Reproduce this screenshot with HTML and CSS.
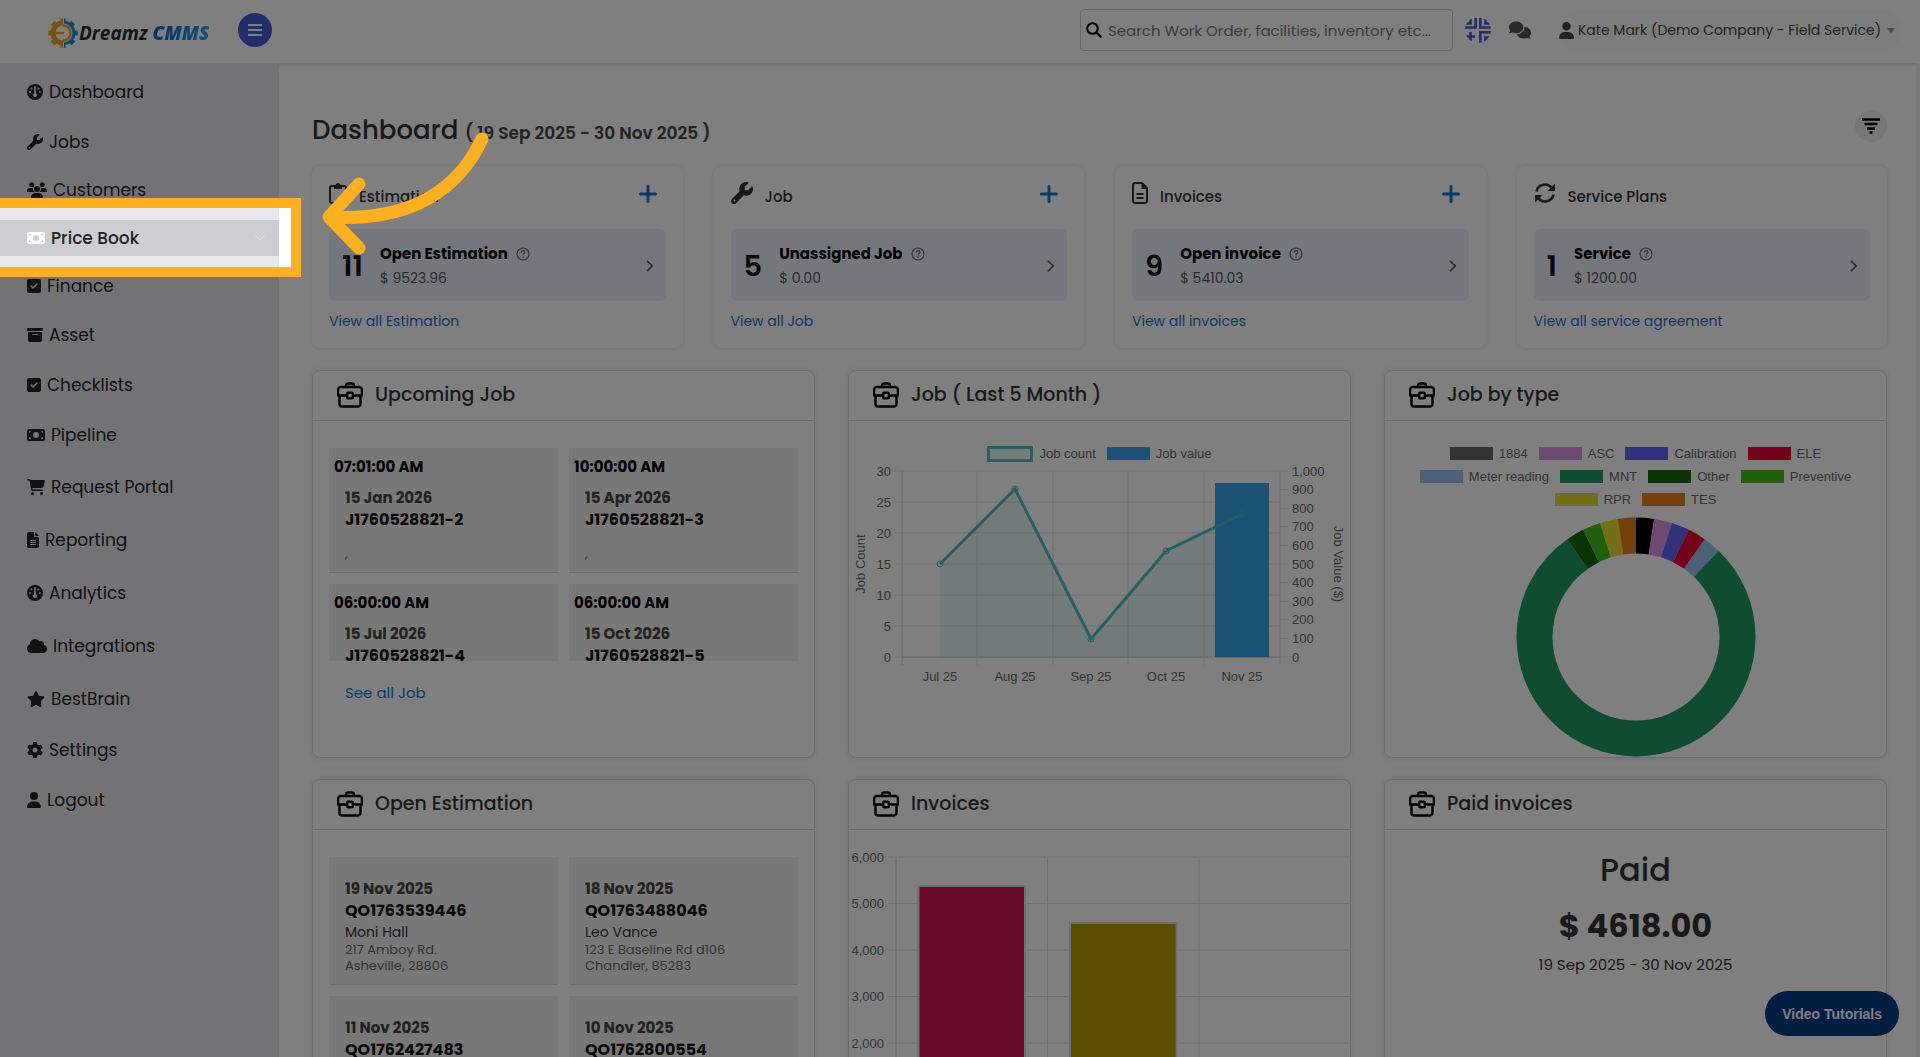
FILE: index.html
```html
<!DOCTYPE html>
<html lang="en">

<head>
    <meta charset="UTF-8">
    <meta name="viewport" content="width=device-width, initial-scale=1.0">
    <title>Dashboard - Dreamz CMMS</title>
    <link rel="stylesheet" href="styles.css">
</head>

<body>
    <!-- Shared icons -->
    <svg class="sprite" aria-hidden="true">
        <symbol id="i-gauge" viewBox="0 0 512 512">
            <path fill-rule="evenodd" d="M0 256a256 256 0 1 1 512 0A256 256 0 1 1 0 256zM256 64c-16 0-28 12-28 28v202a64 64 0 1 0 56 0V92c0-16-12-28-28-28zM144 112a32 32 0 1 0 0 64 32 32 0 1 0 0-64zM368 112a32 32 0 1 0 0 64 32 32 0 1 0 0-64zM96 224a32 32 0 1 0 0 64 32 32 0 1 0 0-64zM416 224a32 32 0 1 0 0 64 32 32 0 1 0 0-64z" />
        </symbol>
        <symbol id="i-wrench" viewBox="0 0 512 512">
            <path d="M352 320c88.4 0 160-71.6 160-160c0-15.3-2.2-30.1-6.2-44.2c-3.1-10.8-16.4-13.2-24.3-5.3l-76.8 76.8c-3 3-7.1 4.7-11.3 4.7H336c-8.8 0-16-7.2-16-16V118.6c0-4.2 1.7-8.3 4.7-11.3l76.8-76.8c7.9-7.9 5.4-21.2-5.3-24.3C382.1 2.2 367.3 0 352 0C263.6 0 192 71.6 192 160c0 19.1 3.4 37.5 9.5 54.5L19.9 396.1C7.2 408.8 0 426.1 0 444.1C0 481.6 30.4 512 67.9 512c18 0 35.3-7.2 48-19.9L297.5 310.5c17 6.2 35.4 9.5 54.5 9.5zM80 408a24 24 0 1 1 0 48 24 24 0 1 1 0-48z" />
        </symbol>
        <symbol id="i-users" viewBox="0 0 640 512">
            <path d="M72 88a80 80 0 1 1 160 0A80 80 0 1 1 72 88zM408 88a80 80 0 1 1 160 0A80 80 0 1 1 408 88zM224 224a96 96 0 1 1 192 0A96 96 0 1 1 224 224zM0 286c0-52 42-94 94-94h72c10 0 20 2 29 5a130 130 0 0 0 37 123H20c-11 0-20-9-20-20zM640 286c0-52-42-94-94-94h-72c-10 0-20 2-29 5a130 130 0 0 1-37 123h212c11 0 20-9 20-20zM128 485c0-74 60-133 133-133h118c73 0 133 59 133 133 0 15-12 27-27 27H155c-15 0-27-12-27-27z" />
        </symbol>
        <symbol id="i-money" viewBox="0 0 576 512">
            <path d="M64 64C28.7 64 0 92.7 0 128V384c0 35.3 28.7 64 64 64H512c35.3 0 64-28.7 64-64V128c0-35.3-28.7-64-64-64H64zm64 320H64V320c35.3 0 64 28.7 64 64zM64 192V128h64c0 35.3-28.7 64-64 64zM448 384c0-35.3 28.7-64 64-64v64H448zm64-192c-35.3 0-64-28.7-64-64h64v64zM288 160a96 96 0 1 1 0 192 96 96 0 1 1 0-192z" />
        </symbol>
        <symbol id="i-check" viewBox="0 0 448 512">
            <path d="M64 32C28.7 32 0 60.7 0 96V416c0 35.3 28.7 64 64 64H384c35.3 0 64-28.7 64-64V96c0-35.3-28.7-64-64-64H64zM337 209L209 337c-9.4 9.4-24.6 9.4-33.9 0l-64-64c-9.4-9.4-9.4-24.6 0-33.9s24.6-9.4 33.9 0l47 47L303 175c9.4-9.4 24.6-9.4 33.9 0s9.4 24.6 0 33.9z" />
        </symbol>
        <symbol id="i-archive" viewBox="0 0 512 512">
            <path fill-rule="evenodd" d="M32 32H480c17.7 0 32 14.3 32 32V96c0 17.7-14.3 32-32 32H32C14.3 128 0 113.7 0 96V64C0 46.3 14.3 32 32 32zm0 128H480V416c0 35.3-28.7 64-64 64H96c-35.3 0-64-28.7-64-64V160zm128 80c0 8.8 7.2 16 16 16H336c8.8 0 16-7.2 16-16s-7.2-16-16-16H176c-8.8 0-16 7.2-16 16z" />
        </symbol>
        <symbol id="i-cart" viewBox="0 0 576 512">
            <path d="M0 24C0 10.7 10.7 0 24 0H69.5c22 0 41.5 12.8 50.6 32h411c26.3 0 45.5 25 38.6 50.4l-41 152.3c-8.5 31.4-37 53.3-69.5 53.3H170.7l5.4 28.5c2.2 11.3 12.1 19.5 23.6 19.5H488c13.3 0 24 10.7 24 24s-10.7 24-24 24H199.7c-34.6 0-64.3-24.6-70.7-58.5L77.4 54.5c-.7-3.8-4-6.5-7.9-6.5H24C10.7 48 0 37.3 0 24zM128 464a48 48 0 1 1 96 0 48 48 0 1 1 -96 0zm336-48a48 48 0 1 1 0 96 48 48 0 1 1 0-96z" />
        </symbol>
        <symbol id="i-file" viewBox="0 0 384 512">
            <path fill-rule="evenodd" d="M64 0C28.7 0 0 28.7 0 64V448c0 35.3 28.7 64 64 64H320c35.3 0 64-28.7 64-64V160H256c-17.7 0-32-14.3-32-32V0H64zM256 0V128H384L256 0zM112 256H272c8.8 0 16 7.2 16 16s-7.2 16-16 16H112c-8.8 0-16-7.2-16-16s7.2-16 16-16zm0 64H272c8.8 0 16 7.2 16 16s-7.2 16-16 16H112c-8.8 0-16-7.2-16-16s7.2-16 16-16zm0 64H272c8.8 0 16 7.2 16 16s-7.2 16-16 16H112c-8.8 0-16-7.2-16-16s7.2-16 16-16z" />
        </symbol>
        <symbol id="i-cloud" viewBox="0 0 640 512">
            <path d="M0 336c0 79.5 64.5 144 144 144H512c70.7 0 128-57.3 128-128c0-61.9-44-113.6-102.4-125.4c4.1-10.7 6.4-22.4 6.4-34.6c0-53-43-96-96-96c-19.7 0-38.1 6-53.3 16.2C367 64.2 315.3 32 256 32C167.6 32 96 103.6 96 192c0 2.7 .1 5.4 .2 8.1C40.2 219.8 0 273.2 0 336z" />
        </symbol>
        <symbol id="i-star" viewBox="0 0 576 512">
            <path d="M316.9 18C311.6 7 300.4 0 288.1 0s-23.4 7-28.8 18L195 150.3 51.4 171.5c-12 1.8-22 10.2-25.7 21.7s-.7 24.2 7.9 32.7L137.8 329 113.2 474.7c-2 12 3 24.2 12.9 31.3s23 8 33.8 2.3l128.3-68.5 128.3 68.5c10.8 5.7 23.9 4.9 33.8-2.3s14.9-19.3 12.9-31.3L438.5 329 542.7 225.9c8.6-8.5 11.7-21.2 7.9-32.7s-13.7-19.9-25.7-21.7L381.2 150.3 316.9 18z" />
        </symbol>
        <symbol id="i-gear" viewBox="0 0 512 512">
            <path d="M495.9 166.6c3.2 8.7 .5 18.4-6.4 24.6l-43.3 39.4c1.1 8.3 1.7 16.8 1.7 25.4s-.6 17.1-1.7 25.4l43.3 39.4c6.9 6.2 9.6 15.9 6.4 24.6c-4.4 11.9-9.7 23.3-15.8 34.3l-4.7 8.1c-6.6 11-14 21.4-22.1 31.2c-5.9 7.2-15.7 9.6-24.5 6.8l-55.7-17.7c-13.4 10.3-28.2 18.9-44 25.4l-12.5 57.1c-2 9.1-9 16.3-18.2 17.8c-13.8 2.3-28 3.5-42.5 3.5s-28.7-1.2-42.5-3.5c-9.2-1.5-16.2-8.7-18.2-17.8l-12.5-57.1c-15.8-6.5-30.6-15.1-44-25.4L83.1 425.9c-8.8 2.8-18.6 .3-24.5-6.8c-8.1-9.8-15.5-20.2-22.1-31.2l-4.7-8.1c-6.1-11-11.4-22.4-15.8-34.3c-3.2-8.7-.5-18.4 6.4-24.6l43.3-39.4C64.6 273.1 64 264.6 64 256s.6-17.1 1.7-25.4L22.4 191.2c-6.9-6.2-9.6-15.9-6.4-24.6c4.4-11.9 9.7-23.3 15.8-34.3l4.7-8.1c6.6-11 14-21.4 22.1-31.2c5.9-7.2 15.7-9.6 24.5-6.8l55.7 17.7c13.4-10.3 28.2-18.9 44-25.4l12.5-57.1c2-9.1 9-16.3 18.2-17.8C227.3 1.2 241.5 0 256 0s28.7 1.2 42.5 3.5c9.2 1.5 16.2 8.7 18.2 17.8l12.5 57.1c15.8 6.5 30.6 15.1 44 25.4l55.7-17.7c8.8-2.8 18.6-.3 24.5 6.8c8.1 9.8 15.5 20.2 22.1 31.2l4.7 8.1c6.1 11 11.4 22.4 15.8 34.3zM256 336a80 80 0 1 0 0-160 80 80 0 1 0 0 160z" />
        </symbol>
        <symbol id="i-user" viewBox="0 0 448 512">
            <path d="M224 256A128 128 0 1 0 224 0a128 128 0 1 0 0 256zm-45.7 48C79.8 304 0 383.8 0 482.3C0 498.7 13.3 512 29.7 512H418.3c16.4 0 29.7-13.3 29.7-29.7C448 383.8 368.2 304 269.7 304H178.3z" />
        </symbol>
        <symbol id="i-comments" viewBox="0 0 640 512">
            <path d="M208 352c114.9 0 208-78.8 208-176S322.9 0 208 0S0 78.8 0 176c0 38.6 14.7 74.3 39.6 103.4c-3.5 9.4-8.7 17.7-14.2 24.7c-4.8 6.2-9.7 11-13.3 14.3c-1.8 1.6-3.3 2.9-4.3 3.7c-.5 .4-.9 .7-1.1 .8l-.2 .2C1 327.2-1.4 334.4 .8 340.9S9.1 352 16 352c21.8 0 43.8-5.6 62.1-12.5c9.2-3.5 17.8-7.4 25.2-11.4C134.1 343.3 169.8 352 208 352zM448 176c0 112.3-99.1 196.9-216.5 207C255.8 457.4 336.4 512 432 512c38.2 0 73.9-8.7 104.7-23.9c7.5 4 16 7.9 25.2 11.4c18.3 6.9 40.3 12.5 62.1 12.5c6.9 0 13.1-4.5 15.2-11.1c2.1-6.6-.2-13.8-5.8-17.9l-.2-.2c-.2-.2-.6-.4-1.1-.8c-1-.8-2.5-2-4.3-3.7c-3.6-3.3-8.5-8.1-13.3-14.3c-5.5-7-10.7-15.4-14.2-24.7c24.9-29 39.6-64.7 39.6-103.4c0-92.8-84.9-168.9-192.6-175.5c.4 5.1 .6 10.3 .6 15.5z" />
        </symbol>
        <symbol id="i-plus" viewBox="0 0 18 18">
            <path fill="none" stroke="currentColor" stroke-width="3" stroke-linecap="round" d="M9 1.5v15M1.5 9h15" />
        </symbol>
        <symbol id="i-chevron" viewBox="0 0 10 16">
            <path fill="none" stroke="currentColor" stroke-width="2" d="M2 2l6 6-6 6" />
        </symbol>
        <symbol id="i-help" viewBox="0 0 14 14">
            <circle cx="7" cy="7" r="6" fill="none" stroke="currentColor" stroke-width="1.2" />
            <path fill="none" stroke="currentColor" stroke-width="1.3" d="M5.2 5.6c0-2.6 3.7-2.4 3.7-.2 0 1.4-1.9 1.4-1.9 2.8M7 9.3v1.4" />
        </symbol>
        <symbol id="i-case" viewBox="0 0 26 26">
            <path fill="none" stroke="currentColor" stroke-width="2.4" stroke-linejoin="round" d="M9 5V3.5a2 2 0 0 1 2-2h4a2 2 0 0 1 2 2V5M4 5h18a3 3 0 0 1 3 3v5.500H1V8a3 3 0 0 1 3-3zM2.500 13.500V22a2.500 2.500 0 0 0 2.500 2.500h16a2.500 2.500 0 0 0 2.500-2.500v-8.500" />
            <rect x="10.200" y="10.700" width="5.600" height="5.600" rx="1" fill="#fff" stroke="currentColor" stroke-width="2.400" />
        </symbol>
    </svg>

    <header class="topbar">
        <a href="#" class="logo">
            <svg viewBox="0 0 30 30" width="30" height="30" aria-hidden="true">
                <clipPath id="left-half"><path d="M0 0h15v30H0z" /></clipPath>
                <clipPath id="right-half"><path d="M16 0h14v30H16z" /></clipPath>
                <g fill="none" stroke="#f5a51c" clip-path="url(#left-half)">
                    <circle cx="15" cy="15" r="10" stroke-width="5" />
                    <circle cx="15" cy="15" r="13" stroke-width="3.500" pathLength="16" stroke-dasharray="1 1" stroke-dashoffset=".5" />
                </g>
                <g fill="none" stroke="#1a8fe3" clip-path="url(#right-half)">
                    <circle cx="15" cy="15" r="11" stroke-width="3" />
                    <circle cx="15" cy="15" r="13" stroke-width="3.500" pathLength="16" stroke-dasharray="1 1" stroke-dashoffset=".5" />
                </g>
                <path fill="none" stroke="#f5a51c" stroke-width="2.500" d="M15 7.500a7.500 7.500 0 0 1 0 15M7 15h9" />
            </svg>
            <span class="logo-name">Dreamz <b>CMMS</b></span>
        </a>
        <button type="button" class="menu-toggle" aria-label="Toggle menu">
            <svg viewBox="0 0 14 12" width="14" height="12"><path stroke="#fff" stroke-width="2" d="M0 1h14M0 6h14M0 11h14" /></svg>
        </button>

        <form class="search">
            <svg viewBox="0 0 16 16" width="16" height="16" aria-hidden="true"><path fill="none" stroke="#000" stroke-width="2" stroke-linecap="round" d="M6.500 1.200a5.300 5.300 0 1 1 0 10.600 5.300 5.300 0 0 1 0-10.600zM10.500 10.500l4.300 4.300" /></svg>
            <input type="search" aria-label="Search" placeholder="Search Work Order, facilities, inventory etc...">
        </form>
        <button type="button" class="icon-btn quick" aria-label="Quick actions">
            <svg viewBox="0 0 26 26" width="26" height="26"><path fill="none" stroke="currentColor" stroke-width="2.600" d="M0 10.500h10.700V1M5.500 2v4.500H1M26 10.500H15.300V1M20.500 2v4.500H25M15.300 26V15.300H26M20.500 25v-4.500H25M5.500 15v9M1 19.500h9" /></svg>
        </button>
        <button type="button" class="icon-btn chat" aria-label="Messages">
            <svg viewBox="0 0 640 512" width="22" height="18"><use href="#i-comments" /></svg>
        </button>
        <button type="button" class="account">
            <svg viewBox="0 0 448 512" width="15" height="17"><use href="#i-user" /></svg>
            <span>Kate Mark (Demo Company - Field Service)</span>
            <i class="caret"></i>
        </button>
    </header>

    <div class="layout">
        <nav class="sidebar">
            <ul>
                <li class="tall"><a href="#"><svg width="16" height="16"><use href="#i-gauge" /></svg>Dashboard</a></li>
                <li><a href="#"><svg width="16" height="16"><use href="#i-wrench" /></svg>Jobs</a></li>
                <li><a href="#"><svg width="20" height="16"><use href="#i-users" /></svg>Customers</a></li>
                <li class="current">
                    <a href="#"><svg width="18" height="16"><use href="#i-money" /></svg>Price Book</a>
                    <svg class="expand" viewBox="0 0 12 8" width="12" height="8"><path fill="none" stroke="currentColor" d="M1 1l5 5 5-5" /></svg>
                    <div class="spotlight"></div>
                </li>
                <li><a href="#"><svg width="14" height="16"><use href="#i-check" /></svg>Finance</a></li>
                <li class="mid"><a href="#"><svg width="16" height="16"><use href="#i-archive" /></svg>Asset</a></li>
                <li class="mid"><a href="#"><svg width="14" height="16"><use href="#i-check" /></svg>Checklists</a></li>
                <li class="mid"><a href="#"><svg width="18" height="16"><use href="#i-money" /></svg>Pipeline</a></li>
                <li class="tall"><a href="#"><svg width="18" height="16"><use href="#i-cart" /></svg>Request Portal</a></li>
                <li class="tall"><a href="#"><svg width="12" height="16"><use href="#i-file" /></svg>Reporting</a></li>
                <li class="tall"><a href="#"><svg width="16" height="16"><use href="#i-gauge" /></svg>Analytics</a></li>
                <li class="tall"><a href="#"><svg width="20" height="16"><use href="#i-cloud" /></svg>Integrations</a></li>
                <li class="tall"><a href="#"><svg width="18" height="16"><use href="#i-star" /></svg>BestBrain</a></li>
                <li class="mid"><a href="#"><svg width="16" height="16"><use href="#i-gear" /></svg>Settings</a></li>
                <li class="mid"><a href="#"><svg width="14" height="16"><use href="#i-user" /></svg>Logout</a></li>
            </ul>
        </nav>

        <main class="content">
            <div class="page-head">
                <h1>Dashboard <small>( 19 Sep 2025 - 30 Nov 2025 )</small></h1>
                <button type="button" class="filter" aria-label="Filter">
                    <svg viewBox="0 0 18 16" width="18" height="16"><path stroke="#000" stroke-width="2.400" d="M0 1.500h18M2.500 6h13M5 10.500h8M7.500 14.500h3" /></svg>
                </button>
            </div>

            <section class="stats">
                <article class="stat">
                    <header>
                        <svg class="stat-icon" viewBox="0 0 18 22" width="18" height="22"><path fill="none" stroke="currentColor" stroke-width="2" d="M5 4H3a2 2 0 0 0-2 2v13a2 2 0 0 0 2 2h12a2 2 0 0 0 2-2V6a2 2 0 0 0-2-2h-2" /><path d="M5 3h1.500a2.600 2.600 0 0 1 5 0H13v4H5z" /></svg>
                        <h2>Estimation</h2>
                        <a href="#" class="add" aria-label="Add estimation"><svg width="18" height="18"><use href="#i-plus" /></svg></a>
                    </header>
                    <a href="#" class="stat-box">
                        <strong>11</strong>
                        <span class="stat-text"><b>Open Estimation <svg width="14" height="14"><use href="#i-help" /></svg></b>$ 9523.96</span>
                        <svg class="go" width="9" height="14"><use href="#i-chevron" /></svg>
                    </a>
                    <a href="#" class="view-all">View all Estimation</a>
                </article>
                <article class="stat">
                    <header>
                        <svg class="stat-icon" width="22" height="22"><use href="#i-wrench" /></svg>
                        <h2>Job</h2>
                        <a href="#" class="add" aria-label="Add job"><svg width="18" height="18"><use href="#i-plus" /></svg></a>
                    </header>
                    <a href="#" class="stat-box">
                        <strong>5</strong>
                        <span class="stat-text"><b>Unassigned Job <svg width="14" height="14"><use href="#i-help" /></svg></b>$ 0.00</span>
                        <svg class="go" width="9" height="14"><use href="#i-chevron" /></svg>
                    </a>
                    <a href="#" class="view-all">View all Job</a>
                </article>
                <article class="stat">
                    <header>
                        <svg class="stat-icon" viewBox="0 0 16 22" width="16" height="22"><path fill="none" stroke="currentColor" stroke-width="2" d="M10 1H3a2 2 0 0 0-2 2v16a2 2 0 0 0 2 2h10a2 2 0 0 0 2-2V6zM4.500 12h7M4.500 16h7" /><path d="M9.500 1v6H15z" /></svg>
                        <h2>Invoices</h2>
                        <a href="#" class="add" aria-label="Add invoice"><svg width="18" height="18"><use href="#i-plus" /></svg></a>
                    </header>
                    <a href="#" class="stat-box">
                        <strong>9</strong>
                        <span class="stat-text"><b>Open invoice <svg width="14" height="14"><use href="#i-help" /></svg></b>$ 5410.03</span>
                        <svg class="go" width="9" height="14"><use href="#i-chevron" /></svg>
                    </a>
                    <a href="#" class="view-all">View all invoices</a>
                </article>
                <article class="stat">
                    <header>
                        <svg class="stat-icon" viewBox="0 0 22 22" width="22" height="22"><path fill="none" stroke="currentColor" stroke-width="2.600" d="M2.500 9.500A8.500 8.500 0 0 1 18 6.500M19.500 12.500A8.500 8.500 0 0 1 4 15.500" /><path d="M21 1.500V9h-7.500zM1 20.500V13h7.500z" /></svg>
                        <h2>Service Plans</h2>
                    </header>
                    <a href="#" class="stat-box">
                        <strong>1</strong>
                        <span class="stat-text"><b>Service <svg width="14" height="14"><use href="#i-help" /></svg></b>$ 1200.00</span>
                        <svg class="go" width="9" height="14"><use href="#i-chevron" /></svg>
                    </a>
                    <a href="#" class="view-all">View all service agreement</a>
                </article>
            </section>

            <section class="panels">
                <article class="panel">
                    <h2><svg width="26" height="26"><use href="#i-case" /></svg>Upcoming Job</h2>
                    <div class="tiles clipped">
                        <div class="tile">
                            <p class="time">07:01:00 AM</p>
                            <p class="date">15 Jan 2026</p>
                            <p class="code">J1760528821-2</p>
                            <p class="place blank">,</p>
                        </div>
                        <div class="tile">
                            <p class="time">10:00:00 AM</p>
                            <p class="date">15 Apr 2026</p>
                            <p class="code">J1760528821-3</p>
                            <p class="place blank">,</p>
                        </div>
                        <div class="tile">
                            <p class="time">06:00:00 AM</p>
                            <p class="date">15 Jul 2026</p>
                            <p class="code">J1760528821-4</p>
                        </div>
                        <div class="tile">
                            <p class="time">06:00:00 AM</p>
                            <p class="date">15 Oct 2026</p>
                            <p class="code">J1760528821-5</p>
                        </div>
                    </div>
                    <a href="#" class="see-all">See all Job</a>
                </article>

                <article class="panel">
                    <h2><svg width="26" height="26"><use href="#i-case" /></svg>Job ( Last 5 Month )</h2>
                    <ul class="legend">
                        <li><i class="outline"></i>Job count</li>
                        <li><i class="c-value"></i>Job value</li>
                    </ul>
                    <svg class="chart" viewBox="0 0 501 220">
                        <g class="grid">
                            <path d="M45 5H431M45 36H431M45 67H431M45 98H431M45 129H431M45 160H431M45 191H439" />
                            <path d="M128 5V199M204 5V199M279 5V199M355 5V199M431 5V199" />
                            <path class="axis" d="M53 5V199M53 191H431" />
                            <path d="M431 5h8M431 23.600h8M431 42.200h8M431 60.800h8M431 79.400h8M431 98h8M431 116.600h8M431 135.200h8M431 153.800h8M431 172.400h8" />
                        </g>
                        <path fill="#4bc0c0" fill-opacity=".13" d="M91 98L166 23 242 173 317 85 366 62V191H91z" />
                        <g class="series">
                            <path d="M91 98L166 23 242 173 317 85 393 48" />
                            <circle cx="91" cy="98" r="3" />
                            <circle cx="166" cy="23" r="3" />
                            <circle cx="242" cy="173" r="3" />
                            <circle cx="317" cy="85" r="3" />
                        </g>
                        <rect x="366" y="17" width="54" height="174" fill="#36a2eb" />
                        <g class="series" opacity=".55">
                            <path d="M366 61.500L393 48" />
                            <circle cx="393" cy="48" r="3" />
                        </g>
                        <g class="end">
                            <text x="42" y="10">30</text>
                            <text x="42" y="41">25</text>
                            <text x="42" y="72">20</text>
                            <text x="42" y="103">15</text>
                            <text x="42" y="134">10</text>
                            <text x="42" y="165">5</text>
                            <text x="42" y="196">0</text>
                        </g>
                        <text x="443" y="10">1,000</text>
                        <text x="443" y="28">900</text>
                        <text x="443" y="47">800</text>
                        <text x="443" y="65">700</text>
                        <text x="443" y="84">600</text>
                        <text x="443" y="103">500</text>
                        <text x="443" y="121">400</text>
                        <text x="443" y="140">300</text>
                        <text x="443" y="158">200</text>
                        <text x="443" y="177">100</text>
                        <text x="443" y="196">0</text>
                        <g class="middle">
                            <text x="91" y="215">Jul 25</text>
                            <text x="166" y="215">Aug 25</text>
                            <text x="242" y="215">Sep 25</text>
                            <text x="317" y="215">Oct 25</text>
                            <text x="393" y="215">Nov 25</text>
                            <text transform="translate(16 98) rotate(-90)">Job Count</text>
                            <text transform="translate(485 98) rotate(90)">Job Value ($)</text>
                        </g>
                    </svg>
                </article>

                <article class="panel">
                    <h2><svg width="26" height="26"><use href="#i-case" /></svg>Job by type</h2>
                    <ul class="legend">
                        <li><i class="c-1884"></i>1884</li>
                        <li><i class="c-asc"></i>ASC</li>
                        <li><i class="c-cal"></i>Calibration</li>
                        <li><i class="c-ele"></i>ELE</li>
                        <li><i class="c-meter"></i>Meter reading</li>
                        <li><i class="c-mnt"></i>MNT</li>
                        <li><i class="c-other"></i>Other</li>
                        <li><i class="c-prev"></i>Preventive</li>
                        <li><i class="c-rpr"></i>RPR</li>
                        <li><i class="c-tes"></i>TES</li>
                    </ul>
                    <!-- 41 jobs, one dash unit per job -->
                    <svg class="donut" viewBox="-120 -120 240 240">
                        <g transform="rotate(-90)" fill="none" stroke-width="36">
                            <circle r="101.500" pathLength="41" stroke="#000" stroke-dasharray="1 40" />
                            <circle r="101.500" pathLength="41" stroke="#da94e0" stroke-dasharray="1 40" stroke-dashoffset="-1" />
                            <circle r="101.500" pathLength="41" stroke="#5e64f8" stroke-dasharray="1 40" stroke-dashoffset="-2" />
                            <circle r="101.500" pathLength="41" stroke="#ec0034" stroke-dasharray="1 40" stroke-dashoffset="-3" />
                            <circle r="101.500" pathLength="41" stroke="#98c0f0" stroke-dasharray="1 40" stroke-dashoffset="-4" />
                            <circle r="101.500" pathLength="41" stroke="#1c9a60" stroke-dasharray="32 9" stroke-dashoffset="-5" />
                            <circle r="101.500" pathLength="41" stroke="#126606" stroke-dasharray="1 40" stroke-dashoffset="-37" />
                            <circle r="101.500" pathLength="41" stroke="#40c018" stroke-dasharray="1 40" stroke-dashoffset="-38" />
                            <circle r="101.500" pathLength="41" stroke="#e6dc2e" stroke-dasharray="1 40" stroke-dashoffset="-39" />
                            <circle r="101.500" pathLength="41" stroke="#e67e14" stroke-dasharray="1 40" stroke-dashoffset="-40" />
                        </g>
                    </svg>
                </article>

                <article class="panel">
                    <h2><svg width="26" height="26"><use href="#i-case" /></svg>Open Estimation</h2>
                    <div class="tiles">
                        <div class="tile estimate">
                            <p class="date">19 Nov 2025</p>
                            <p class="code">QO1763539446</p>
                            <p class="name">Moni Hall</p>
                            <p class="place">217 Amboy Rd.<br>Asheville, 28806</p>
                        </div>
                        <div class="tile estimate">
                            <p class="date">18 Nov 2025</p>
                            <p class="code">QO1763488046</p>
                            <p class="name">Leo Vance</p>
                            <p class="place">123 E Baseline Rd d106<br>Chandler, 85283</p>
                        </div>
                        <div class="tile estimate">
                            <p class="date">11 Nov 2025</p>
                            <p class="code">QO1762427483</p>
                        </div>
                        <div class="tile estimate">
                            <p class="date">10 Nov 2025</p>
                            <p class="code">QO1762800554</p>
                        </div>
                    </div>
                </article>

                <article class="panel">
                    <h2><svg width="26" height="26"><use href="#i-case" /></svg>Invoices</h2>
                    <svg class="chart" viewBox="0 0 501 336">
                        <g class="grid">
                            <path d="M39 27H501M39 73.500H501M39 120H501M39 166.500H501M39 213H501M39 259.500H501" />
                            <path d="M198.500 27V306M350 27V306" />
                            <path class="axis" d="M47 27V306M39 306H501" />
                        </g>
                        <path fill="#d21858" stroke="#dedede" stroke-width="2" d="M69.500 306V56H176v250" />
                        <path fill="#b89c00" stroke="#dedede" stroke-width="2" d="M221 306V93h106.500v213" />
                        <g class="end">
                            <text x="35" y="32">6,000</text>
                            <text x="35" y="78">5,000</text>
                            <text x="35" y="125">4,000</text>
                            <text x="35" y="171">3,000</text>
                            <text x="35" y="218">2,000</text>
                        </g>
                    </svg>
                </article>

                <article class="panel">
                    <h2><svg width="26" height="26"><use href="#i-case" /></svg>Paid invoices</h2>
                    <div class="paid">
                        <h3>Paid</h3>
                        <strong>$ 4618.00</strong>
                        <p>19 Sep 2025 - 30 Nov 2025</p>
                    </div>
                </article>
            </section>
        </main>
    </div>

    <button type="button" class="tutorials">Video Tutorials</button>

    <svg class="arrow" viewBox="0 0 170 126" width="170" height="126" aria-hidden="true">
        <path d="M161 9C138 58 92 92 8 87M38 54L8 87L38 118" />
    </svg>
</body>

</html>
```
FILE: styles.css
```css
* {
    margin: 0;
    padding: 0;
    box-sizing: border-box;
}

body {
    display: flex;
    flex-direction: column;
    height: 100vh;
    overflow: hidden;
    background: #fff;
    color: #333;
    font-family: Poppins, Inter, sans-serif;
    font-size: 15px;
}

a {
    color: #0b78d0;
    text-decoration: none;
}

ul {
    list-style: none;
}

button {
    border: 0;
    background: none;
    font: inherit;
    cursor: pointer;
}

svg {
    flex: none;
    fill: currentColor;
}

.sprite {
    position: absolute;
    width: 0;
    height: 0;
}

/* top bar */
.topbar {
    display: flex;
    align-items: center;
    height: 63px;
    flex: none;
    padding: 0 18px 3px 48px;
    box-shadow: 0 1px 4px rgba(0, 0, 0, 0.2);
}

.logo {
    display: flex;
    align-items: center;
    gap: 1px;
    width: 190px;
    padding-top: 5px;
}

.logo-name {
    font: italic bold 19px "Open Sans", sans-serif;
    color: #2a2a2a;
}

.logo-name b {
    background: linear-gradient(90deg, #0a62d0, #1ba8e0);
    background-clip: text;
    -webkit-background-clip: text;
    color: transparent;
}

.menu-toggle {
    display: flex;
    align-items: center;
    justify-content: center;
    width: 34px;
    height: 34px;
    border-radius: 50%;
    background: #425bd8;
}

.search {
    display: flex;
    align-items: center;
    gap: 6px;
    width: 373px;
    height: 42px;
    margin-left: auto;
    padding: 0 5px;
    border: 1px solid #ccc;
    border-radius: 4px;
}

.search input {
    flex: 1;
    min-width: 0;
    border: 0;
    outline: 0;
    background: none;
    font: inherit;
    font-size: 15px;
}

.search input::placeholder {
    color: #777;
}

.icon-btn {
    display: flex;
}

.quick {
    margin-left: 12px;
    color: #425bd8;
}

.quick svg {
    border-radius: 50%;
}

.chat {
    margin: 0 28px 0 18px;
    color: #555;
}

.account {
    display: flex;
    align-items: center;
    gap: 4px;
    height: 41px;
    padding-right: 7px;
    border-radius: 21px;
    background: #fafafa;
    color: #444;
    font-size: 14px;
}

.caret {
    margin-left: 2px;
    border: 4px solid transparent;
    border-top: 5px solid #888ea0;
    border-bottom: 0;
}

/* sidebar */
.layout {
    display: flex;
    flex: 1;
    min-height: 0;
}

.sidebar {
    width: 279px;
    flex: none;
    padding-top: 2px;
    background: #e7e7ec;
}

.sidebar li {
    display: flex;
    align-items: center;
    height: 48px;
}

.sidebar li.mid {
    height: 50px;
}

.sidebar li.tall {
    height: 53px;
}

.sidebar a {
    display: flex;
    flex: 1;
    align-items: center;
    gap: 6px;
    height: 36px;
    padding-left: 27px;
    color: #222;
    font-size: 17px;
}

.sidebar .current {
    position: relative;
}

.current a {
    background: #cdced3;
    font-weight: 500;
}

.current a svg {
    color: #fff;
}

.expand {
    position: absolute;
    right: 13px;
    color: #dcdde2;
}

.spotlight {
    position: absolute;
    z-index: 5;
    top: -16px;
    left: -10px;
    right: -22px;
    height: 79px;
    border: 10px solid #ffb021;
    box-shadow: 0 0 0 200vmax rgba(0, 0, 0, 0.5);
    pointer-events: none;
}

/* content */
.content {
    flex: 1;
    min-width: 0;
    overflow: hidden;
    padding: 47px 29px 0 33px;
    border-right: 4px solid #eee;
}

.page-head {
    display: flex;
    justify-content: space-between;
    height: 40px;
    margin-bottom: 16px;
}

.page-head h1 {
    line-height: 40px;
    font-size: 26px;
    font-weight: 500;
}

.page-head small {
    font-size: 17px;
    font-weight: 600;
    color: #444;
}

.filter {
    display: flex;
    align-items: center;
    justify-content: center;
    width: 32px;
    height: 32px;
    border-radius: 50%;
    background: #eee;
}

.stats {
    display: grid;
    grid-template-columns: repeat(4, 1fr);
    gap: 31px;
    margin-bottom: 22px;
}

.stat {
    padding: 16px 17px 15px;
    border-radius: 8px;
    box-shadow: 0 0 5px rgba(0, 0, 0, 0.12);
}

.stat header {
    display: flex;
    gap: 12px;
    height: 28px;
    margin-bottom: 19px;
}

.stat h2 {
    line-height: 30px;
    font-size: 15px;
    font-weight: 500;
}

.add {
    margin: 3px 9px 0 auto;
}

.stat-box {
    display: flex;
    align-items: center;
    height: 72px;
    padding: 2px 12px 0;
    border-radius: 6px;
    background: #ebeffe;
    color: #555;
    font-size: 14px;
}

.stat-box strong {
    margin: 0 17px 0 1px;
    color: #111;
    font-size: 29px;
    font-weight: 600;
}

.stat-text {
    line-height: 24px;
}

.stat-text b {
    display: flex;
    align-items: center;
    gap: 8px;
    color: #000;
    font-size: 15px;
}

.stat-text svg {
    color: #666;
}

.go {
    margin-left: auto;
}

.view-all {
    display: block;
    margin-top: 8px;
    line-height: 24px;
    font-size: 14px;
}

.panels {
    display: grid;
    grid-template-columns: repeat(3, 1fr);
    gap: 21px 33px;
}

.panel {
    min-height: 388px;
    border: 1px solid #d8d8d8;
    border-radius: 8px;
    box-shadow: 0 0 6px rgba(0, 0, 0, 0.12);
    overflow: hidden;
}

.panel h2 {
    display: flex;
    align-items: center;
    gap: 12px;
    height: 50px;
    padding: 0 0 2px 24px;
    border-bottom: 1px solid #d4d4d4;
    font-size: 19px;
    font-weight: 500;
}

.panel h2 svg {
    color: #000;
}

.tiles {
    display: grid;
    grid-template-columns: 1fr 1fr;
    gap: 11px;
    margin: 27px 16px 0;
}

.tiles.clipped {
    height: 213px;
    overflow: hidden;
}

.tile {
    height: 125px;
    padding: 8px 16px 0;
    border-bottom: 1px solid #d8d8d8;
    background: #f0f0f0;
    line-height: 22px;
}

.tile.estimate {
    height: 128px;
    padding-top: 21px;
}

.time {
    margin: 0 0 9px -11px;
    color: #000;
    font-weight: 700;
}

.date {
    color: #444;
    font-weight: 700;
}

.code {
    color: #111;
    font-size: 16px;
    font-weight: 700;
}

.name {
    line-height: 20px;
    font-size: 14px;
}

.place {
    line-height: 16px;
    color: #666;
    font-size: 13px;
}

.place.blank {
    margin-top: 15px;
}

.see-all {
    display: block;
    margin: 20px 32px 0;
    line-height: 24px;
}

/* charts */
.legend {
    display: flex;
    flex-wrap: wrap;
    justify-content: center;
    column-gap: 11px;
    padding: 21px 20px 1px;
    color: #666;
    font: 13px/23px "Liberation Sans", Arial, sans-serif;
}

.legend li {
    display: flex;
    align-items: center;
    gap: 6px;
}

.legend i {
    width: 43px;
    height: 13px;
}

.legend .outline {
    width: 46px;
    height: 16px;
    border: 3px solid #4bc0c0;
    background: #edf9f9;
}

.c-value { background: #36a2eb; }
.c-1884 { background: #666; }
.c-asc { background: #da94e0; }
.c-cal { background: #5e64f8; }
.c-ele { background: #ec0034; }
.c-meter { background: #98c0f0; }
.c-mnt { background: #1c9a60; }
.c-other { background: #126606; }
.c-prev { background: #40c018; }
.c-rpr { background: #e6dc2e; }
.c-tes { background: #e67e14; }

.chart {
    display: block;
    width: 100%;
    fill: #666;
    font: 13px "Liberation Sans", Arial, sans-serif;
}

.grid {
    fill: none;
    stroke: #dedede;
}

.grid .axis {
    stroke: #ccc;
}

.series {
    fill: none;
    stroke: #4bc0c0;
    stroke-width: 3;
}

.series circle {
    stroke-width: 1;
}

.end {
    text-anchor: end;
}

.middle {
    text-anchor: middle;
}

.donut {
    display: block;
    width: 240px;
    margin: 5px auto 0;
}

.paid {
    padding-top: 12px;
    text-align: center;
}

.paid h3 {
    line-height: 56px;
    font-size: 32px;
    font-weight: 500;
}

.paid strong {
    display: block;
    line-height: 56px;
    font-size: 32px;
}

.paid p {
    line-height: 22px;
}

/* floating elements */
.tutorials {
    position: fixed;
    right: 21px;
    bottom: 21px;
    height: 45px;
    padding: 0 17px;
    border-radius: 23px;
    background: #003c82;
    color: #fff;
    font: bold 14px "Liberation Sans", Arial, sans-serif;
}

.arrow {
    position: absolute;
    z-index: 6;
    top: 130px;
    left: 321px;
    fill: none;
    stroke: #ffb021;
    stroke-width: 13;
    stroke-linecap: round;
    stroke-linejoin: round;
    pointer-events: none;
}

@media (max-width: 1100px) {
    .stats,
    .panels {
        grid-template-columns: 1fr 1fr;
    }
}
```
